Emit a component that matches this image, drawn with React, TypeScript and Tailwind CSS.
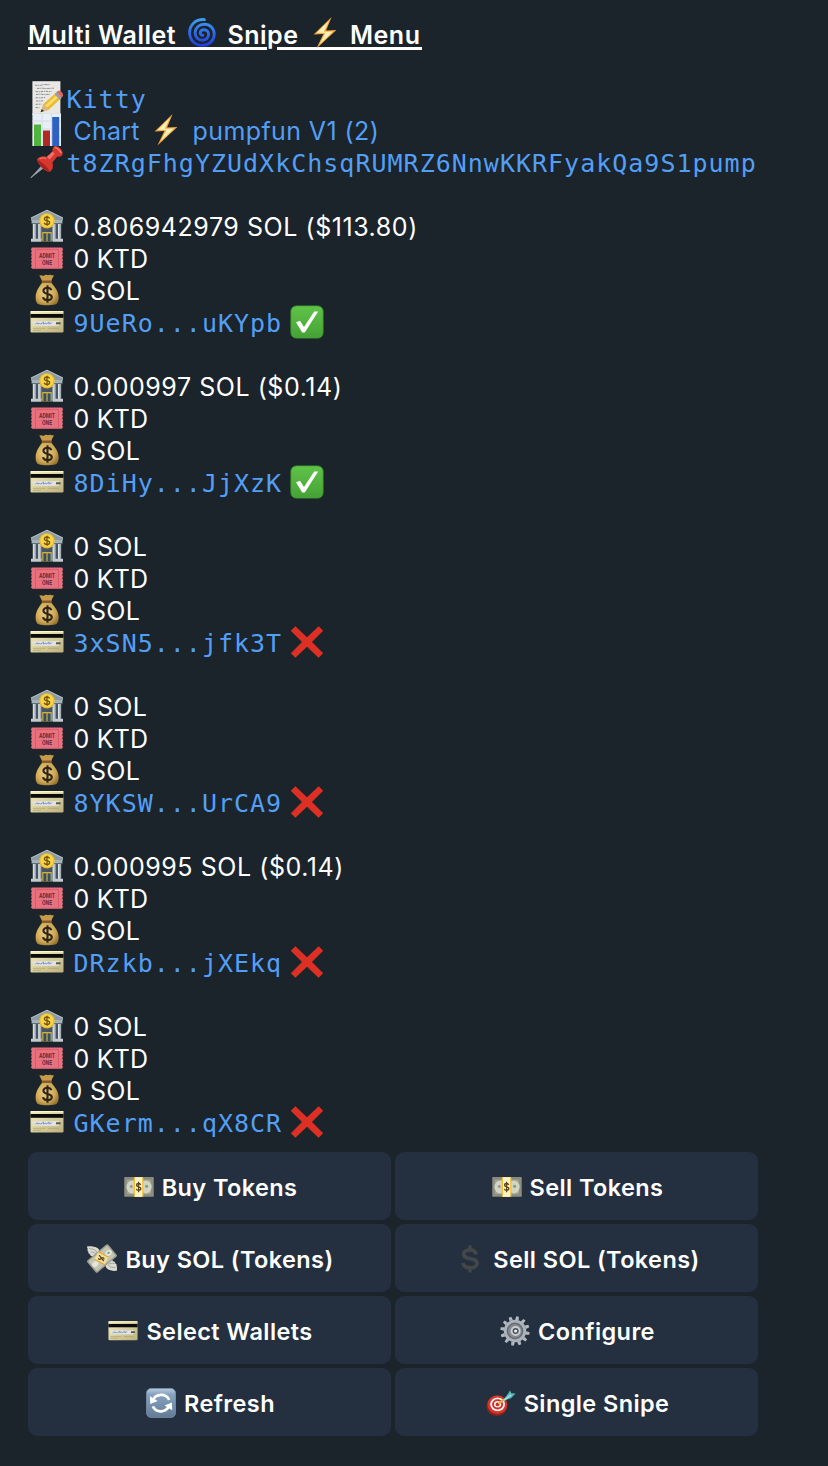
import type { ReactNode } from "react";

const icon = "block -mt-[3px] h-[34px] w-[34px] shrink-0";

function Bank() {
  return (
    <svg viewBox="0 0 34 34" className={icon}>
      <defs>
        <linearGradient id="bankCol" x1="0" x2="1">
          <stop offset="0" stopColor="#e9eef0" />
          <stop offset="1" stopColor="#8d9ba3" />
        </linearGradient>
      </defs>
      <rect x="3" y="12" width="28" height="19" fill="#46555f" />
      <path d="M1 11.5V8.8L17 1l16 7.8v2.7z" fill="#8d9da5" />
      <path d="M1 9L17 1.2 33 9" fill="none" stroke="#b9c6cb" strokeWidth="1" />
      <rect x="1.6" y="11" width="30.8" height="3.4" fill="#a5b2b8" />
      <rect x="1.6" y="14.2" width="30.8" height="1" fill="#5d6b74" />
      <rect x="2.8" y="15" width="3.2" height="15" fill="url(#bankCol)" />
      <rect x="8.2" y="15" width="3.2" height="15" fill="url(#bankCol)" />
      <rect x="22.6" y="15" width="3.2" height="15" fill="url(#bankCol)" />
      <rect x="28" y="15" width="3.2" height="15" fill="url(#bankCol)" />
      <rect x="12.2" y="23" width="9.6" height="9.5" fill="#d7ac35" />
      <rect x="13.4" y="24.4" width="3" height="8" fill="#315070" />
      <rect x="17.6" y="24.4" width="3" height="8" fill="#315070" />
      <path d="M1 29.8h10.600v3H1zM22.400 29.800H33v3H22.400z" fill="#c2cbd0" />
      <circle cx="17" cy="11.800" r="7.800" fill="#e8b92d" />
      <circle cx="17" cy="11.600" r="6.600" fill="#f7d648" />
      <path d="M19.600 9.600c-.5-1.200-1.400-1.600-2.600-1.600-1.500 0-2.600.7-2.600 1.900 0 2.700 5.300 1 5.300 3.700 0 1.300-1.200 1.900-2.700 1.900-1.400 0-2.400-.5-2.800-1.800M17 6.700v10" fill="none" stroke="#775112" strokeWidth="1.300" />
    </svg>
  );
}

function Ticket() {
  return (
    <svg viewBox="0 0 34 34" className={icon}>
      <path
        d="M2.600 6.500h28.800a1.400 1.400 0 0 1 1.400 1.400v1.600l-.8.900.8.900v1.700l-.8.900.8.900v1.700l-.8.900.8.900v1.700l-.8.900.8.900v1.700l-.8.900.8.900v1a1.400 1.400 0 0 1-1.400 1.400H2.600a1.400 1.400 0 0 1-1.400-1.400v-1l.8-.9-.8-.9v-1.700l.8-.9-.8-.9v-1.700l.8-.9-.8-.9v-1.700l.8-.9-.8-.9v-1.700l.8-.9-.8-.9V7.900a1.400 1.400 0 0 1 1.400-1.400z"
        fill="#e9717e"
      />
      <path d="M5.500 8.300h23v19h-23z" fill="none" stroke="#d35a69" strokeWidth=".9" />
      <g fill="#6c2b38" fontFamily="Roboto, sans-serif" fontSize="7.600" fontWeight="700" textAnchor="middle" transform="translate(17 0) scale(.68 1)">
        <text x="0" y="17">ADMIT</text>
        <text x="0" y="23.800">ONE</text>
      </g>
    </svg>
  );
}

function MoneyBag() {
  return (
    <svg viewBox="0 0 34 34" className={icon}>
      <defs>
        <radialGradient id="bag" cx=".42" cy=".45" r=".65">
          <stop offset="0" stopColor="#efd58a" />
          <stop offset=".65" stopColor="#cda755" />
          <stop offset="1" stopColor="#94702d" />
        </radialGradient>
      </defs>
      <path d="M12.500 9C11.500 6.500 10.300 4 9.300 2.500c1.700-.9 3 .5 4.300.2C15 2.400 15.500 1.400 17 2c1.500.6 2.600-.7 4 .1 1 .6 2-.3 3 .3-1.300 1.700-2.300 4-3 6.600z" fill="#c49b4b" />
      <path d="M12.500 9h8.500c2.500 4 7.700 8 7.700 15.300 0 4.200-1.200 6.600-3.600 7.200-3.600.9-12.700.9-16 0-2.400-.7-3.500-3-3.500-6.800C5.600 17.300 10 13 12.500 9z" fill="url(#bag)" />
      <rect x="11.600" y="7.500" width="10.200" height="2.600" rx="1.300" fill="#8b5a2b" />
      <path d="M21.400 17.200c-.7-1.700-2-2.500-4-2.500-2.300 0-4 1.200-4 3.100 0 4.300 8.400 2 8.400 6.200 0 2-1.800 3.100-4.300 3.100-2.300 0-4-.9-4.600-2.900M17.500 12.300v17.400" fill="none" stroke="#30251a" strokeWidth="2.100" />
    </svg>
  );
}

function Card({ className = icon }: { className?: string }) {
  return (
    <svg viewBox="0 0 34 34" className={className}>
      <defs>
        <linearGradient id="card" x1="0" y1="0" x2="1" y2="1">
          <stop offset="0" stopColor="#f4edc0" />
          <stop offset="1" stopColor="#bcb17b" />
        </linearGradient>
      </defs>
      <rect x=".5" y="6" width="33" height="21.500" rx="1.200" fill="url(#card)" />
      <rect x=".5" y="6" width="33" height="1.200" rx=".6" fill="#fff8c8" />
      <rect x=".5" y="9" width="33" height="3.800" fill="#0b0b0b" />
      <rect x="3" y="16.200" width="26" height="4.600" fill="#e4e3e0" />
      <path d="M5 19.600l2-2 .8 1.600 2-1 .8.900 3-1.900-.3 1.800 2.500-1 .6 1 2.700-2-.2 2 3-1.200" fill="none" stroke="#6f8fc9" strokeWidth=".9" />
      <rect x="26" y="17.300" width="4.500" height="2" fill="#555" />
      <path d="M3 23.300h12M3 25.300h8M18 23.300h11" stroke="#a59a68" strokeWidth=".6" />
    </svg>
  );
}

function Check() {
  return (
    <svg viewBox="0 0 34 34" className={icon}>
      <defs>
        <linearGradient id="chk" x1="0" y1="0" x2="0" y2="1">
          <stop offset="0" stopColor="#5fc348" />
          <stop offset="1" stopColor="#45a234" />
        </linearGradient>
      </defs>
      <rect x=".9" y=".9" width="32.200" height="32.200" rx="5.500" fill="url(#chk)" stroke="#3d9a31" strokeWidth=".8" />
      <path d="M6 17.200l4-1.400 4 6.300L24.200 6.600h4L14.800 27.400h-2.600z" fill="#fff" />
    </svg>
  );
}

function Cross() {
  return (
    <svg viewBox="0 0 34 34" className={icon}>
      <path d="M5.400 1.200L17 12.200 28.600 1.200l4.600 4.600L22 17l11.200 11.300-4.600 4.500L17 21.700 5.400 32.800.8 28.300 12 17 .8 5.800z" fill="#dd3024" />
    </svg>
  );
}

function Memo() {
  return (
    <svg viewBox="0 0 34 34" className={icon}>
      <rect x="2.400" y=".2" width="28" height="33.400" fill="#e9e8e4" />
      <path d="M2.400 33h28" stroke="#bdbcb8" strokeWidth="1.200" />
      <path d="M5 4.300h6l2-.7h7M7 7.500l5-.4 3 .5 9-.4M5.500 10.500l4 .3 5-.5 7 .3M6 13.500l5-.3 4 .4 5-.3M5.500 16.700l4 .2 6-.4M6 20h6l1-.4M5.500 23.300l6-.2M5.500 26.500l4 .2" fill="none" stroke="#85868a" strokeWidth=".9" strokeDasharray="2.600 .7 1.200 .6" />
      <path d="M10.500 31.200l3-8.200L26.300 11.400l5 5.600L18.700 28.700z" fill="#edb92f" />
      <path d="M15 24.400L27.600 13l2 2.200L17 26.700z" fill="#fbdc6a" />
      <path d="M10.500 31.200l3-8.200 5.200 5.700z" fill="#dcb887" />
      <path d="M10.500 31.200l1.300-3.300 2.200 2.200z" fill="#2e2e2e" />
      <path d="M24.400 13.100l2.300-2.100 5 5.600-2.300 2.100z" fill="#9da1a7" />
      <path d="M26.500 11.200l1.300-1.100c2.400-1.500 6.500 3 4.900 5.300l-1.200 1.200z" fill="#dc6a62" />
    </svg>
  );
}

function BarChart() {
  return (
    <svg viewBox="0 0 34 34" className={icon}>
      <rect x="2.400" y=".4" width="28.600" height="32.600" fill="#e8eef5" />
      <path d="M2.400 8h28.600M2.400 16h28.600M2.400 24h28.600M12 .4v32M21.500.4v32" stroke="#cbd8e6" strokeWidth=".8" />
      <rect x="4" y="11.500" width="7" height="21.500" fill="#4fb53c" />
      <rect x="13" y="17.500" width="7" height="15.500" fill="#b02a22" />
      <rect x="22.200" y="4" width="7" height="29" fill="#2e62c2" />
    </svg>
  );
}

function Pin() {
  return (
    <svg viewBox="0 0 34 34" className={icon}>
      <path d="M.8 32.800L12 20.500l2 2z" fill="#9aa5ad" stroke="#9aa5ad" strokeWidth=".8" />
      <path d="M6.900 14.300c3.200-3.600 7.600-3.400 9.800-2.500l5.900-5.300c-.7-2 .2-4.500 2-5.300 3.600-.9 9 4.300 8 8.200-.9 1.900-3.200 2.700-5.300 2l-4.900 6.100c1 3.400.6 6.900-2.300 9.300-2 .3-5-1-8.200-4.300-3.200-3.200-4.900-6.300-5-8.200z" fill="#d8372f" />
      <path d="M6.900 14.300c3.200 1.400 11.200 8.400 13.200 12.500-2 .3-5-1-8.200-4.300-3.200-3.200-4.900-6.300-5-8.200z" fill="#a9211f" />
      <path d="M17 12l5.600-5.500 2.100 2.200-5.200 5.800z" fill="#f0716a" />
      <path d="M24.600 2.600c1.800-.8 5.600 3 6.600 5.600" fill="none" stroke="#f27b73" strokeWidth="1.400" />
      <path d="M9.500 14c2-1.400 4.500-1.400 6.600-.4" fill="none" stroke="#ef726b" strokeWidth="1.300" />
    </svg>
  );
}

function Bolt({ className = icon }: { className?: string }) {
  return (
    <svg viewBox="0 0 34 34" className={className}>
      <path d="M23.600 1L5.600 18.400l9.800-.4L8.400 32.600 28.400 14l-10.300.4z" fill="#f5a83b" />
      <path d="M21 4.800L8.600 17l8.800-.3-5.700 11.500L25 15.400l-9.200.3z" fill="#fff0b8" />
    </svg>
  );
}

const titleIcon = "relative -mt-1 block h-[34px] w-[34px] shrink-0";

function Cyclone() {
  return (
    <svg viewBox="0 0 34 34" className={titleIcon}>
      <defs>
        <linearGradient id="cyc" x1="0" y1="0" x2="0" y2="1">
          <stop offset="0" stopColor="#3e9bf0" />
          <stop offset="1" stopColor="#1f3fdc" />
        </linearGradient>
      </defs>
      <path
        d="M19.500 3.600C10 3 4.600 9.600 4.600 16.600c0 7.400 5.300 12.800 12.600 12.800 7 0 12-5 12-11.200 0-5.800-4.300-10-9.800-10-5.400 0-9.300 3.900-9.300 8.600 0 4.500 3.300 7.500 7.200 7.500 3.600 0 6.300-2.600 6.300-5.700 0-2.900-2.200-4.900-4.700-4.900-2.200 0-3.700 1.500-3.700 3.300 0 1.500 1.100 2.500 2.600 2.300"
        fill="none"
        stroke="url(#cyc)"
        strokeWidth="2.900"
        strokeLinecap="round"
      />
    </svg>
  );
}

const small = "block h-[30px] w-[30px] shrink-0";

function Dollars() {
  return (
    <svg viewBox="0 0 30 30" className={small}>
      <rect x=".4" y="5.200" width="29.200" height="19.400" fill="#a3a38f" />
      <rect x="2" y="6.800" width="26" height="16.200" fill="none" stroke="#77796c" strokeWidth=".9" />
      <ellipse cx="8" cy="15" rx="5.600" ry="6.400" fill="#d3d4c4" />
      <ellipse cx="22" cy="15" rx="5.600" ry="6.400" fill="#d3d4c4" />
      <circle cx="7.300" cy="14.600" r="1.400" fill="#8d9484" />
      <circle cx="22.600" cy="14.200" r="1.500" fill="#6fa377" />
      <rect x="9.800" y="5.200" width="9.600" height="19.600" fill="#f2bd34" />
      <rect x="11" y="5.200" width="7.200" height="19.600" fill="#fdf4cb" />
      <path d="M16.700 13c-.3-1-1-1.500-2.100-1.500s-2 .7-2 1.700c0 2.200 4.300 1.200 4.300 3.400 0 1.200-1 1.800-2.300 1.800-1.200 0-2-.5-2.300-1.600M14.600 9.800v10.400" fill="none" stroke="#5b4513" strokeWidth="1.300" />
    </svg>
  );
}

function MoneyWings() {
  return (
    <svg viewBox="0 0 30 30" className={small}>
      <path d="M.3 2.300c3.500-.2 8 .2 10.600 2 1.700 1.300 2 3.500 2.300 5.600l-4 4.300c-2-.1-3.200-.7-3.700-1.900-1.500-.2-2.400-.9-2.500-2.100-1.400-.4-1.900-1.300-1.500-2.400C.5 7 .1 5.900.8 5 .1 4.300 0 3.200.3 2.300z" fill="#d9dad1" />
      <path d="M29.700 26.800c-3.500.4-7.200-.2-9.400-2-1.800-1.400-2-3.600-2.200-5.600l4-4c2.300.2 3.500.9 4 2 1.500.3 2.200 1 2.200 2.200 1.300.5 1.600 1.300 1.200 2.300.8 1.400.8 3.500.2 5.100z" fill="#d9dad1" />
      <path d="M2 4.600c4 .2 7 1.300 8 4M3.500 8c3 .1 5 .8 6 3M27.500 19.500c-2.500-.6-4.500-.2-6 1M28.500 23.500c-3 .3-5.500-.3-7-2" fill="none" stroke="#96988d" strokeWidth=".8" />
      <g transform="translate(15 14.500) rotate(-40) scale(.94 .72) translate(-15 -15)">
        <rect x=".4" y="4" width="29.200" height="22" rx="2" fill="#9c9d8c" />
        <rect x="2" y="6" width="26" height="18" rx="1" fill="#c3c5b4" />
        <circle cx="5.800" cy="15" r="3.700" fill="#e4e5d8" />
        <circle cx="24.200" cy="15" r="3.700" fill="#e4e5d8" />
        <circle cx="24.200" cy="15" r="1.500" fill="#78a37c" />
      </g>
      <g transform="translate(14.500 14) rotate(28)">
        <rect x="-5.800" y="-4.600" width="11.600" height="9.600" fill="#e5a935" />
        <rect x="-5.800" y="-3.400" width="11.600" height="7.200" fill="#f5dfa0" />
        <path d="M-2.500 1.500c.3 1.200 2.400 1 2.400-.8 0-2 2.800-2.500 2.800-.4M-3.500-1.500L3.500 1.800" fill="none" stroke="#57451b" strokeWidth="1.200" />
      </g>
    </svg>
  );
}

function HeavyDollar() {
  return (
    <svg viewBox="0 0 30 30" className={small}>
      <path d="M21.200 10.300c-.8-3-3-4.400-6.200-4.400-3.700 0-6.300 1.700-6.300 4.400 0 6.200 13.300 2.600 13.300 8.900 0 3-2.900 4.700-6.900 4.700-3.900 0-6.500-1.600-7.300-4.900" fill="none" stroke="#444648" strokeWidth="3.700" />
      <path d="M15 1.500v5M15 23.500v5" stroke="#444648" strokeWidth="3.400" />
    </svg>
  );
}

function Gear() {
  const teeth = Array.from({ length: 12 }, (_, i) => i * 30 + 10);
  return (
    <svg viewBox="0 0 30 30" className={small}>
      {teeth.map((a) => (
        <path key={a} d="M13.200 4l.5-3.700h2.600l.5 3.700z" fill="#b3b8c0" transform={`rotate(${a} 15 15)`} />
      ))}
      <circle cx="15" cy="15" r="9.800" fill="#747981" stroke="#adb3bb" strokeWidth="2.800" />
      <circle cx="15" cy="15" r="7.400" fill="#868b93" stroke="#5e6269" strokeWidth=".9" />
      <circle cx="15.600" cy="15" r="4" fill="#4a4e55" stroke="#c9ced5" strokeWidth="2" />
      <circle cx="15.600" cy="15" r="1.600" fill="#e7eaee" />
    </svg>
  );
}

function RefreshIcon() {
  return (
    <svg viewBox="0 0 30 30" className={small}>
      <defs>
        <linearGradient id="ref" x1="0" y1="0" x2="0" y2="1">
          <stop offset="0" stopColor="#b9cbdd" />
          <stop offset=".2" stopColor="#86a3c1" />
          <stop offset="1" stopColor="#637b95" />
        </linearGradient>
      </defs>
      <rect x=".4" y=".4" width="29.200" height="29.200" rx="5" fill="url(#ref)" stroke="#8098b2" strokeWidth=".7" />
      <path d="M6.800 12.600a9 9 0 0 1 16.400-.8M23.200 17.600a9 9 0 0 1-16.400.8" fill="none" stroke="#fff" strokeWidth="2.700" />
      <path d="M3.900 8.300l.4 7.800 7.400-3.100zM26.200 22.200l-.3-7.800-7.400 3.100z" fill="#fff" />
    </svg>
  );
}

function Dart() {
  return (
    <svg viewBox="0 0 30 30" className={small}>
      <ellipse cx="10.800" cy="18.200" rx="10.400" ry="9.800" fill="#8d211c" />
      <ellipse cx="11.400" cy="16.600" rx="10" ry="9.400" fill="#d5352b" />
      <ellipse cx="11.600" cy="16.300" rx="7.400" ry="6.900" fill="#f4f0ee" />
      <ellipse cx="11.600" cy="16.300" rx="5.500" ry="5.100" fill="#cf2f28" />
      <ellipse cx="11.600" cy="16.300" rx="3.600" ry="3.300" fill="#f4f0ee" />
      <circle cx="11.600" cy="16.300" r="1.900" fill="#c82c25" />
      <path d="M12.500 16l5-4.200" stroke="#e4b53e" strokeWidth="2" />
      <path d="M16 13.600l6-7.800 2-3.200 1.400 2.600 4.200.3-3.200 3.300-1.400 1.400z" fill="#58b9bd" />
      <path d="M17.500 12.300l7.600-5.100" stroke="#a5e3e2" strokeWidth="1.400" />
    </svg>
  );
}

function Row({ icon: i, children }: { icon: ReactNode; children: ReactNode }) {
  return (
    <div className="flex h-8 items-center pl-[1.500px]">
      {i}
      {children}
    </div>
  );
}

const wallets = [
  { sol: "0.806942979 SOL ($113.80)", address: "9UeRo...uKYpb", ok: true },
  { sol: "0.000997 SOL ($0.14)", address: "8DiHy...JjXzK", ok: true },
  { sol: "0 SOL", address: "3xSN5...jfk3T", ok: false },
  { sol: "0 SOL", address: "8YKSW...UrCA9", ok: false },
  { sol: "0.000995 SOL ($0.14)", address: "DRzkb...jXEkq", ok: false },
  { sol: "0 SOL", address: "GKerm...qX8CR", ok: false },
];

const mono = "mt-[2px] whitespace-pre font-['DejaVu_Sans_Mono',monospace] text-[25px] tracking-[1px] text-[#539ff5]";

const actions = [
  { icon: <Dollars />, label: "Buy Tokens" },
  { icon: <Dollars />, label: "Sell Tokens" },
  { icon: <MoneyWings />, label: "Buy SOL (Tokens)" },
  { icon: <HeavyDollar />, label: "Sell SOL (Tokens)" },
  { icon: <Card className={small} />, label: "Select Wallets" },
  { icon: <Gear />, label: "Configure" },
  { icon: <RefreshIcon />, label: "Refresh" },
  { icon: <Dart />, label: "Single Snipe" },
];

export default function App() {
  return (
    <main className="flex h-[1466px] w-[828px] flex-col bg-[#1b232b] pl-7 pt-[19px] font-['Inter',sans-serif] text-[25px] leading-8 text-white">
      <h1 className="relative flex h-8 w-[394px] items-center whitespace-nowrap font-semibold tracking-[0.500px]">
        <span className="absolute left-0 top-7 h-[3px] w-[239px] bg-white" />
        <span className="absolute right-0 top-7 h-[3px] w-[145px] bg-white" />
        <span className="w-[156.500px]">Multi Wallet</span>
        <Cyclone />
        <span className="ml-[9px] w-[80.500px]">Snipe</span>
        <Bolt className={titleIcon} />
        <span className="ml-2">Menu</span>
      </h1>
      <section className="mt-8 text-[#539ff5]">
        <Row icon={<Memo />}><span className={`${mono} ml-[3px]`}>Kitty</span></Row>
        <Row icon={<BarChart />}>
          <span className="ml-[10px] w-[75px] tracking-[0.200px]">Chart</span>
          <Bolt />
          <span className="ml-[10px] tracking-[0.400px]">pumpfun V1 (2)</span>
        </Row>
        <Row icon={<Pin />}><span className={`${mono} ml-[3px]`}>t8ZRgFhgYZUdXkChsqRUMRZ6NnwKKRFyakQa9S1pump</span></Row>
      </section>
      {wallets.map((w) => (
        <section key={w.address} className="mt-8">
          <Row icon={<Bank />}>
            <span className={w.sol === "0 SOL" ? "ml-[10px] tracking-[0.300px]" : "ml-[10px] tracking-[0.550px]"}>{w.sol}</span>
          </Row>
          <Row icon={<Ticket />}><span className="ml-[10px] tracking-[0.200px]">0 KTD</span></Row>
          <Row icon={<MoneyBag />}><span className="ml-[3px] tracking-[0.300px]">0 SOL</span></Row>
          <Row icon={<Card />}>
            <span className={`${mono} ml-[10px]`}>{w.address}</span>
            <span className="ml-2">{w.ok ? <Check /> : <Cross />}</span>
          </Row>
        </section>
      ))}
      <nav className="mt-[13px] grid w-[730px] grid-cols-2 gap-1">
        {actions.map((a) => (
          <button key={a.label} className="flex h-[68px] items-center justify-center gap-2 rounded-[9px] bg-[#243040] pl-[2px] pt-[2px] text-[23.500px] font-semibold tracking-[0.400px]">
            {a.icon}
            <span className="mt-[2px]">{a.label}</span>
          </button>
        ))}
      </nav>
    </main>
  );
}
